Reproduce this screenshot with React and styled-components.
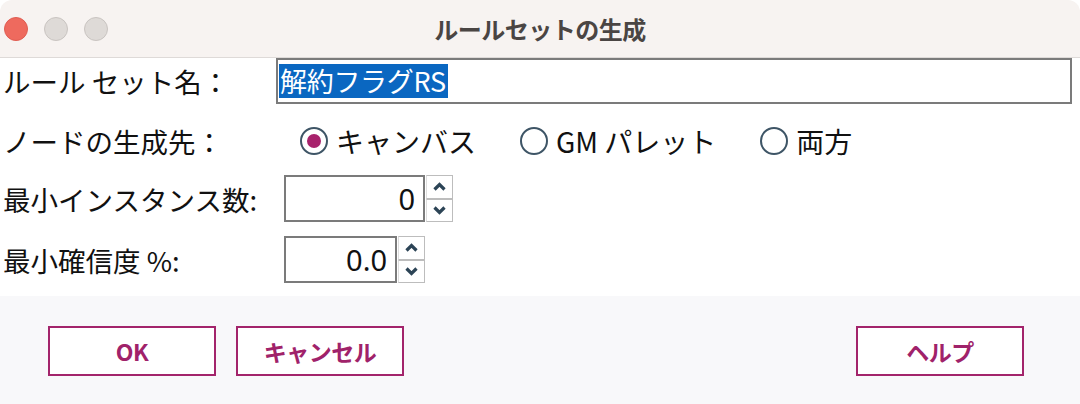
import styled, { createGlobalStyle } from 'styled-components';

const GlobalStyle = createGlobalStyle`
  html, body {
    margin: 0;
    padding: 0;
    background: #ffffff;
  }
  body {
    font-family: "Noto Sans CJK JP", "Noto Sans", sans-serif;
  }
`;

const Window = styled.div`
  width: 1080px;
  height: 404px;
  display: flex;
  flex-direction: column;
  border-radius: 12px 12px 0 0;
  overflow: hidden;
  background: #ffffff;
`;

const TitleBar = styled.div`
  height: 57px;
  flex: none;
  display: flex;
  align-items: center;
  padding-left: 4px;
  background: #f7f3f1;
  border-bottom: 1px solid #dedad8;
  position: relative;
`;

const Lights = styled.div`
  display: flex;
  gap: 16px;
`;

const Light = styled.span`
  width: 24px;
  height: 24px;
  border-radius: 50%;
  box-sizing: border-box;
  background: ${(p) => (p.$red ? '#ee6a5e' : '#dedad7')};
  border: 1px solid ${(p) => (p.$red ? '#e05d52' : '#c9c4c1')};
`;

const Title = styled.div`
  position: absolute;
  left: 0;
  right: 0;
  text-align: center;
  font-size: 24px;
  font-weight: 700;
  color: #4a4543;
  pointer-events: none;
  letter-spacing: -0.5px;
`;

const Body = styled.div`
  flex: none;
  height: 238px;
  display: flex;
  flex-direction: column;
  padding-left: 3px;
`;

const Row = styled.div`
  display: flex;
  align-items: center;
  height: ${(p) => p.$h}px;
  margin-top: ${(p) => p.$mt || 0}px;
`;

const Label = styled.div`
  width: ${(p) => p.$w}px;
  flex: none;
  font-size: 27.5px;
  color: #111111;
  white-space: nowrap;
`;

const NameInput = styled.div`
  flex: 1;
  height: 46px;
  margin-right: 8px;
  box-sizing: border-box;
  border: 2px solid #7b7b7b;
  display: flex;
  align-items: center;
  padding-left: 1px;
  background: #ffffff;
`;

const Selected = styled.span`
  background: #0a67c1;
  color: #ffffff;
  font-size: 27px;
  line-height: 34px;
  height: 34px;
  padding: 0 2px 0 1px;
  letter-spacing: -0.3px;
`;

const RadioGroup = styled.div`
  display: flex;
  align-items: center;
  gap: 44px;
`;

const RadioItem = styled.label`
  display: flex;
  align-items: center;
  gap: 8px;
  font-size: 28px;
  color: #111111;
`;

const RadioCircle = styled.span`
  width: 28px;
  height: 28px;
  box-sizing: border-box;
  border-radius: 50%;
  border: 2px solid #3e5566;
  background: #ffffff;
  display: flex;
  align-items: center;
  justify-content: center;

  &::after {
    content: '';
    width: 14px;
    height: 14px;
    border-radius: 50%;
    background: #a8226c;
    display: ${(p) => (p.$checked ? 'block' : 'none')};
  }
`;

const Spinner = styled.div`
  display: flex;
  height: 47px;
`;

const SpinField = styled.div`
  width: ${(p) => p.$w}px;
  box-sizing: border-box;
  border: 2px solid #7b7b7b;
  display: flex;
  align-items: center;
  justify-content: flex-end;
  padding-right: 8px;
  font-family: "Noto Sans", "Noto Sans CJK JP", sans-serif;
  font-size: 29px;
  color: #111111;
`;

const SpinButtons = styled.div`
  width: 27px;
  display: flex;
  flex-direction: column;
  margin-left: 1px;
`;

const SpinButton = styled.div`
  flex: 1;
  box-sizing: border-box;
  border: 1px solid #bdbdbd;
  border-left-color: #dddddd;
  display: flex;
  align-items: center;
  justify-content: center;
  background: #ffffff;
`;

const Footer = styled.div`
  flex: 1;
  background: #f8f8fa;
  display: flex;
  align-items: flex-start;
  padding: 30px 56px 0 48px;
  gap: 20px;
`;

const Button = styled.button`
  width: 168px;
  height: 50px;
  box-sizing: border-box;
  border: 2px solid #a3246b;
  background: #ffffff;
  color: #a0226a;
  font-family: "Noto Sans CJK JP", "Noto Sans", sans-serif;
  font-size: 23px;
  font-weight: 700;
  letter-spacing: -0.5px;
  padding: 0;
  margin-left: ${(p) => (p.$push ? 'auto' : '0')};
`;

const Chevron = ({ up }) => (
  <svg width="13" height="9" viewBox="0 0 13 9">
    <path
      d={up ? 'M1.5 7.5 L6.5 2.5 L11.5 7.5' : 'M1.5 1.5 L6.5 6.5 L11.5 1.5'}
      fill="none"
      stroke="#2c4456"
      strokeWidth="3.2"
    />
  </svg>
);

function NumberSpinner({ value, width }) {
  return (
    <Spinner>
      <SpinField $w={width}>{value}</SpinField>
      <SpinButtons>
        <SpinButton>
          <Chevron up />
        </SpinButton>
        <SpinButton>
          <Chevron />
        </SpinButton>
      </SpinButtons>
    </Spinner>
  );
}

export default function App() {
  return (
    <>
      <GlobalStyle />
      <Window>
        <TitleBar>
          <Lights>
            <Light $red />
            <Light />
            <Light />
          </Lights>
          <Title>ルールセットの生成</Title>
        </TitleBar>

        <Body>
          <Row $h={46}>
            <Label $w={273}>ルール セット名：</Label>
            <NameInput>
              <Selected>解約フラグRS</Selected>
            </NameInput>
          </Row>

          <Row $h={34} $mt={20}>
            <Label $w={297}>ノードの生成先：</Label>
            <RadioGroup>
              <RadioItem>
                <RadioCircle $checked />
                キャンバス
              </RadioItem>
              <RadioItem>
                <RadioCircle />
                GM パレット
              </RadioItem>
              <RadioItem>
                <RadioCircle />
                両方
              </RadioItem>
            </RadioGroup>
          </Row>

          <Row $h={47} $mt={17}>
            <Label $w={281}>最小インスタンス数:</Label>
            <NumberSpinner value="0" width={141} />
          </Row>

          <Row $h={47} $mt={14}>
            <Label $w={281}>最小確信度 %:</Label>
            <NumberSpinner value="0.0" width={113} />
          </Row>
        </Body>

        <Footer>
          <Button>OK</Button>
          <Button>キャンセル</Button>
          <Button $push>ヘルプ</Button>
        </Footer>
      </Window>
    </>
  );
}
